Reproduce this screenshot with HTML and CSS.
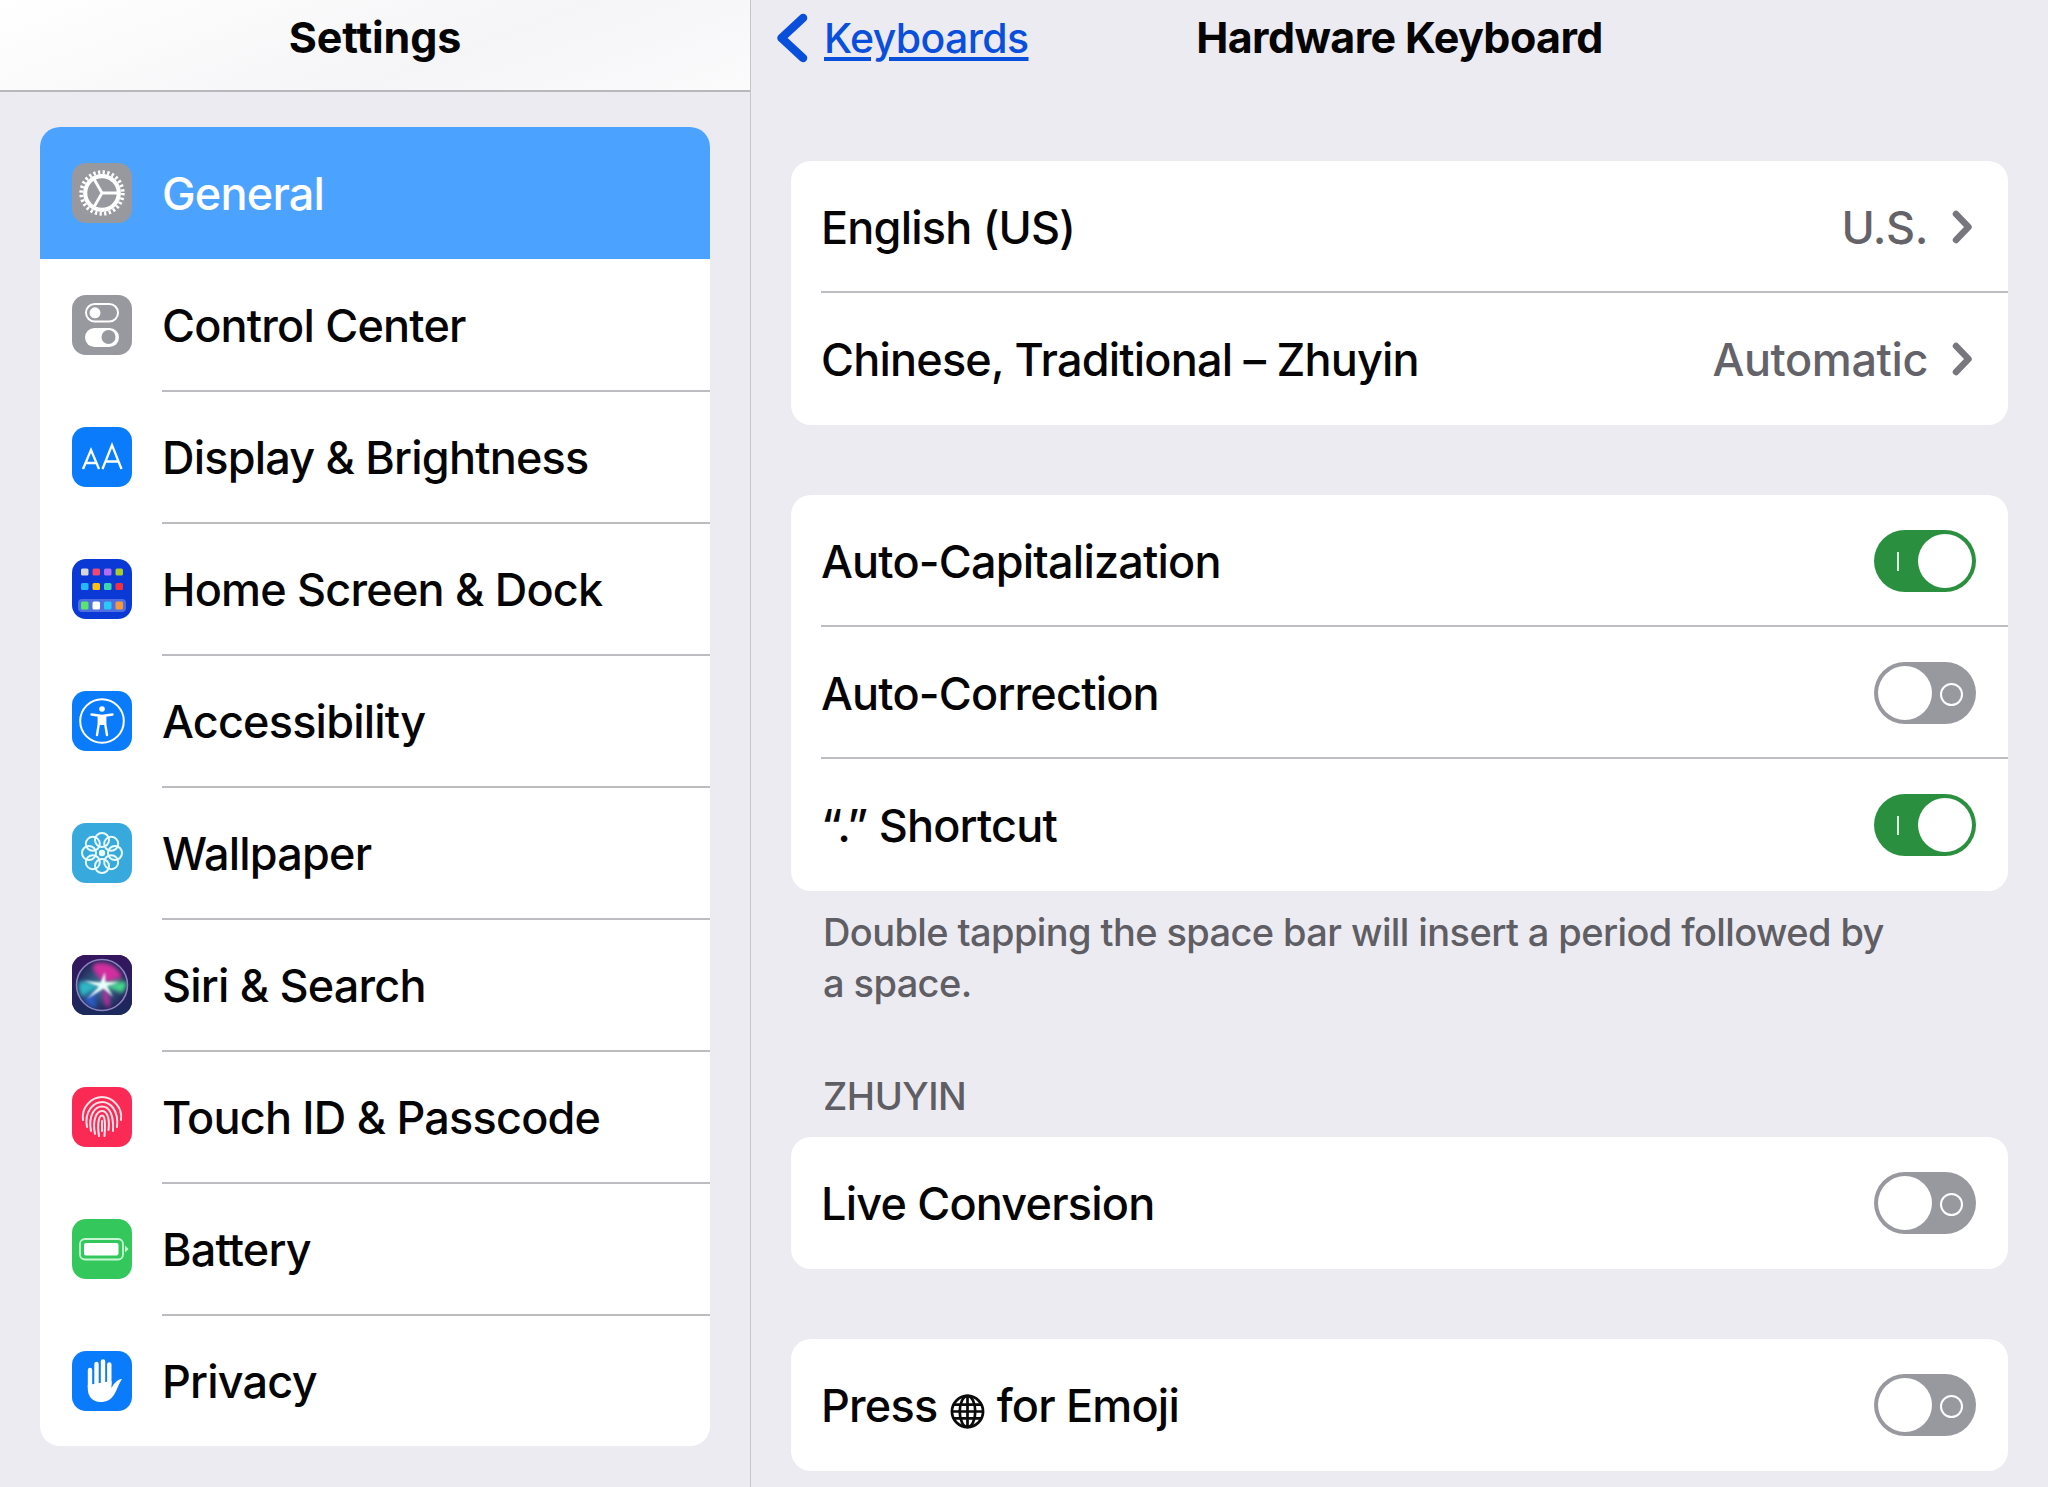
FILE: index.html
```html
<!DOCTYPE html>
<html lang="en">
<head>
<meta charset="utf-8">
<title>Hardware Keyboard</title>
<link rel="stylesheet" href="styles.css">
</head>
<body>
<div class="app">
<aside class="sidebar">
  <header class="side-head"><h1 class="title side-title">Settings</h1></header>
  <ul class="menu">
    <li class="menu-row active">
      <span class="app-icon bg-gray">
        <svg viewBox="0 0 60 60"><circle cx="30" cy="30" r="20.800" fill="none" stroke="#fff" stroke-width="3.800" stroke-dasharray="2.300 2.367"/><circle cx="30" cy="30" r="16.800" fill="none" stroke="#fff" stroke-width="4.200"/><path d="M30 30H46M30 30L22 16M30 30L22 44" stroke="#fff" stroke-width="2.800" fill="none"/></svg>
      </span>
      <span class="menu-label">General</span>
    </li>
    <li class="menu-row">
      <span class="app-icon bg-gray">
        <svg viewBox="0 0 60 60"><rect x="14" y="9" width="32" height="17.500" rx="8.750" fill="none" stroke="#fff" stroke-width="2"/><circle cx="23" cy="17.800" r="5.500" fill="#fff"/><rect x="13" y="33" width="34" height="19" rx="9.500" fill="#fff"/><circle cx="36.500" cy="42" r="7" fill="#98989f"/></svg>
      </span>
      <span class="menu-label">Control Center</span>
    </li>
    <li class="menu-row">
      <span class="app-icon bg-blue">
        <svg viewBox="0 0 60 60"><path d="M11 42L19 23L27 42M13.800 36H24.200" fill="none" stroke="#fff" stroke-width="2.300"/><path d="M30.500 42L40 18L49.500 42M33.500 34.500H46.500" fill="none" stroke="#fff" stroke-width="2.300"/></svg>
      </span>
      <span class="menu-label">Display &amp; Brightness</span>
    </li>
    <li class="menu-row">
      <span class="app-icon bg-home">
        <svg viewBox="0 0 60 60"><rect x="9" y="9.500" width="7.500" height="7" rx="1.500" fill="#d8d8d8"/><rect x="20.500" y="9.500" width="7.500" height="7" rx="1.500" fill="#f0486e"/><rect x="32" y="9.500" width="7.500" height="7" rx="1.500" fill="#b26cf5"/><rect x="43.500" y="9.500" width="7.500" height="7" rx="1.500" fill="#a8cc2c"/><rect x="9" y="24" width="7.500" height="7" rx="1.500" fill="#27b8fa"/><rect x="20.500" y="24" width="7.500" height="7" rx="1.500" fill="#fcc10e"/><rect x="32" y="24" width="7.500" height="7" rx="1.500" fill="#3cd6ae"/><rect x="43.500" y="24" width="7.500" height="7" rx="1.500" fill="#f5303d"/><rect x="6" y="40" width="48" height="13" rx="4" fill="#4f6fe0"/><rect x="9" y="42.500" width="7.500" height="8" rx="1.500" fill="#5be56f"/><rect x="20.500" y="42.500" width="7.500" height="8" rx="1.500" fill="#fff"/><rect x="32" y="42.500" width="7.500" height="8" rx="1.500" fill="#27c8fa"/><rect x="43.500" y="42.500" width="7.500" height="8" rx="1.500" fill="#f79a3c"/></svg>
      </span>
      <span class="menu-label">Home Screen &amp; Dock</span>
    </li>
    <li class="menu-row">
      <span class="app-icon bg-blue">
        <svg viewBox="0 0 60 60"><circle cx="30" cy="30" r="21.800" fill="none" stroke="#fff" stroke-width="2"/><circle cx="30" cy="18" r="2.800" fill="#fff"/><path d="M19.500 23.500L30 25L40.500 23.500" fill="none" stroke="#fff" stroke-width="2.400" stroke-linecap="round"/><path d="M26.800 25V33L25 44M33.200 25V33L35 44" fill="none" stroke="#fff" stroke-width="2.400" stroke-linecap="round"/><rect x="26.800" y="25" width="6.400" height="9" fill="#fff"/></svg>
      </span>
      <span class="menu-label">Accessibility</span>
    </li>
    <li class="menu-row">
      <span class="app-icon bg-wall">
        <svg viewBox="0 0 60 60"><g fill="none" stroke="#e8fbff" stroke-width="2"><circle cx="30" cy="17" r="7"/><circle cx="30" cy="43" r="7"/><circle cx="17" cy="30" r="7"/><circle cx="43" cy="30" r="7"/><circle cx="20.800" cy="20.800" r="7"/><circle cx="39.200" cy="20.800" r="7"/><circle cx="20.800" cy="39.200" r="7"/><circle cx="39.200" cy="39.200" r="7"/></g><circle cx="30" cy="30" r="3.200" fill="#e8fbff"/></svg>
      </span>
      <span class="menu-label">Wallpaper</span>
    </li>
    <li class="menu-row">
      <span class="app-icon bg-siri">
        <svg viewBox="0 0 60 60"><defs><linearGradient id="siriBg" x1="0" y1="0" x2="0" y2="1"><stop offset="0" stop-color="#35155f"/><stop offset="1" stop-color="#1b2a5c"/></linearGradient><radialGradient id="siriBall" cx="50%" cy="50%" r="50%"><stop offset="0" stop-color="#3c7f9c"/><stop offset="1" stop-color="#232358"/></radialGradient><filter id="siriBlur" x="-30%" y="-30%" width="160%" height="160%"><feGaussianBlur stdDeviation="2"/></filter><filter id="siriSoft" x="-30%" y="-30%" width="160%" height="160%"><feGaussianBlur stdDeviation="0.800"/></filter><clipPath id="siriClip"><circle cx="30" cy="30" r="25"/></clipPath></defs><rect width="60" height="60" fill="url(#siriBg)"/><circle cx="30" cy="30" r="25.500" fill="url(#siriBall)" stroke="#8a85c0" stroke-width="1.600"/><g clip-path="url(#siriClip)"><g filter="url(#siriBlur)"><path d="M32 28C25 20 18 14 22 9C32 5 46 10 50 22C44 25 38 26 32 28Z" fill="#d22f9f"/><path d="M31 29C36 36 39 44 37 53C30 49 31 38 31 29Z" fill="#c12ca0"/><path d="M30 31C22 33 14 40 10 42C6 36 6 30 8 26C16 26 22 29 30 31Z" fill="#2fb7c6"/><path d="M33 31L50 38C54 34 55 30 54 26C46 27 38 28 33 31Z" fill="#45d88f"/><path d="M28 32C24 40 22 48 26 54C16 52 12 46 11 44C18 40 24 36 28 32Z" fill="#2a5bc0"/></g><path d="M33 17L33.500 27L47 27.500L35 31L41 42L31.500 33.500L15 44L27 31.500L12 26L28.500 27.500Z" fill="#eafffb" filter="url(#siriSoft)"/></g></svg>
      </span>
      <span class="menu-label">Siri &amp; Search</span>
    </li>
    <li class="menu-row">
      <span class="app-icon bg-touch">
        <svg viewBox="0 0 60 60"><g fill="none" stroke="#ffe3e8" stroke-width="2" stroke-linecap="round"><path d="M11 33C9 20 20 10 30 10C40 10 51 20 49 33"/><path d="M15 40C12 24 22 15 30 15C38 15 47 23 45 40"/><path d="M19 44C16 28 23 19.500 30 19.500C37 19.500 42 27 41 44"/><path d="M23 47C20 32 25 24 30 24C35 24 38 31 36.500 43"/><path d="M27 49C25 36 27 28.500 30 28.500C33 28.500 33.500 36 32.500 49"/><path d="M30 34V44"/></g></svg>
      </span>
      <span class="menu-label">Touch ID &amp; Passcode</span>
    </li>
    <li class="menu-row">
      <span class="app-icon bg-green">
        <svg viewBox="0 0 60 60"><rect x="8" y="20" width="43" height="20.500" rx="5" fill="none" stroke="#c8f5d2" stroke-width="1.800"/><rect x="12" y="24" width="34.500" height="12.500" rx="2" fill="#fff"/><path d="M53 26.500L56.500 30L53 33.500Z" fill="#c8f5d2"/></svg>
      </span>
      <span class="menu-label">Battery</span>
    </li>
    <li class="menu-row">
      <span class="app-icon bg-blue">
        <svg viewBox="0 0 60 60"><g fill="none" stroke="#fff" stroke-width="4.400" stroke-linecap="round"><path d="M18 19V36"/><path d="M24.500 13V33"/><path d="M31 10.500V33"/><path d="M37.300 13.500V33"/></g><path d="M15.800 34L39.500 30V37C41.500 33 45 28.500 50 28C46.500 33 45.500 38 42.500 43C39 49 34.500 51 28.500 51C20.500 51 15.800 45 15.800 38Z" fill="#fff"/></svg>
      </span>
      <span class="menu-label">Privacy</span>
    </li>
  </ul>
</aside>
<main class="detail">
  <header class="detail-head">
    <a class="back" href="#">
      <svg class="back-chevron" viewBox="0 0 32 50"><path d="M27 5L5.500 25L27 45" fill="none" stroke="#0a4fdc" stroke-width="8.500" stroke-linecap="round" stroke-linejoin="round"/></svg>
      <span class="back-link">Keyboards</span>
    </a>
    <h2 class="title detail-title">Hardware Keyboard</h2>
  </header>
  <section class="group first-group">
    <div class="row"><span class="row-label">English (US)</span><span class="row-value">U.S.</span><svg class="chevron" viewBox="0 0 22 34"><path d="M4 4L16.500 17L4 30" fill="none" stroke="#77777d" stroke-width="6.500" stroke-linecap="round" stroke-linejoin="round"/></svg></div>
    <div class="row"><span class="row-label">Chinese, Traditional – Zhuyin</span><span class="row-value">Automatic</span><svg class="chevron" viewBox="0 0 22 34"><path d="M4 4L16.500 17L4 30" fill="none" stroke="#77777d" stroke-width="6.500" stroke-linecap="round" stroke-linejoin="round"/></svg></div>
  </section>
  <section class="group">
    <div class="row"><span class="row-label">Auto-Capitalization</span><span class="toggle on"></span></div>
    <div class="row"><span class="row-label">Auto-Correction</span><span class="toggle off"></span></div>
    <div class="row"><span class="row-label">“.” Shortcut</span><span class="toggle on"></span></div>
  </section>
  <p class="note">Double tapping the space bar will insert a period followed by a space.</p>
  <h3 class="caption">ZHUYIN</h3>
  <section class="group">
    <div class="row"><span class="row-label">Live Conversion</span><span class="toggle off"></span></div>
  </section>
  <section class="group last-group">
    <div class="row"><span class="row-label">Press <svg class="globe" viewBox="0 0 36 36"><g fill="none" stroke="#0b0b0b" stroke-width="2.800"><circle cx="18" cy="18" r="16"/><ellipse cx="18" cy="18" rx="8" ry="16"/><path d="M18 2V34M3 11H33M2 18H34M3 25H33"/></g></svg> for Emoji</span><span class="toggle off"></span></div>
  </section>
</main>
</div>
</body>
</html>
```
FILE: styles.css
```css
* { box-sizing: border-box; }
html, body { margin: 0; height: 100%; overflow: hidden; }
body {
  width: 2048px;
  height: 1487px;
  background: #ecebf1;
  font-family: Inter, "Liberation Sans", sans-serif;
  color: #050505;
}
.app { display: flex; height: 1487px; }
.sidebar {
  width: 751px;
  flex: none;
  border-right: 1px solid #c6c6ca;
}
.side-head {
  height: 92px;
  padding-top: 12px;
  background: linear-gradient(160deg, #ffffff 0%, #f5f5f7 60%, #fbfbfc 100%);
  border-bottom: 2px solid #b8b8bc;
  text-align: center;
}
.title {
  margin: 0;
  font-size: 43px;
  line-height: 50px;
  font-weight: 700;
  letter-spacing: -0.6px;
  color: #050505;
}
.side-title { letter-spacing: -0.1px; }
.menu {
  list-style: none;
  height: 1319px;
  margin: 35px 40px 0;
  padding: 0;
  background: #fff;
  border-radius: 20px;
  overflow: hidden;
}
.menu-row {
  position: relative;
  height: 132px;
  display: flex;
  align-items: center;
  padding-left: 32px;
  gap: 30px;
}
.menu-row + .menu-row + .menu-row::before {
  content: "";
  position: absolute;
  top: -1px;
  left: 122px;
  right: 0;
  height: 2px;
  background: #bdbdc1;
}
.menu-row.active { background: #4ca3ff; color: #fff; }
.app-icon {
  width: 60px;
  height: 60px;
  flex: none;
  border-radius: 14px;
  overflow: hidden;
}
.app-icon svg { display: block; width: 60px; height: 60px; }
.bg-gray { background: #98989f; }
.bg-blue { background: #0a7cfb; }
.bg-home { background: #0a39d6; }
.bg-wall { background: #38a9dc; }
.bg-siri { background: #1f1d4d; }
.bg-touch { background: #fb2a55; }
.bg-green { background: #34c85c; }
.menu-label {
  font-size: 45px;
  font-weight: 500;
  letter-spacing: -0.8px;
  line-height: 54px;
  padding-top: 1px;
}
.detail { flex: 1; min-width: 0; padding: 0 40px; }
.detail-head {
  position: relative;
  height: 92px;
  display: flex;
  justify-content: center;
  padding-top: 12px;
}
.back {
  position: absolute;
  left: -15px;
  top: 13px;
  display: flex;
  align-items: center;
  gap: 16px;
  text-decoration: none;
}
.back-chevron { width: 32px; height: 50px; display: block; }
.back-link {
  font-size: 41px;
  line-height: 50px;
  color: #0a4fdc;
  text-decoration: underline;
  text-decoration-thickness: 4px;
  text-underline-offset: 4px;
  font-weight: 500;
  letter-spacing: -0.6px;
}
.group {
  width: 1217px;
  margin-top: 70px;
  background: #fff;
  border-radius: 20px;
  overflow: hidden;
}
.first-group { margin-top: 69px; }
.last-group { margin-top: 70px; }
.row {
  position: relative;
  height: 132px;
  display: flex;
  align-items: center;
  padding: 0 32px 0 30px;
}
.row + .row::before {
  content: "";
  position: absolute;
  top: -2px;
  left: 30px;
  right: 0;
  height: 2px;
  background: #bdbdc1;
}
.row-label {
  flex: 1;
  font-size: 45px;
  font-weight: 500;
  line-height: 54px;
  letter-spacing: -0.8px;
  white-space: nowrap;
  padding-top: 2px;
}
.row-value {
  font-size: 45px;
  font-weight: 500;
  line-height: 54px;
  letter-spacing: -0.4px;
  color: #636369;
  margin-right: 24px;
  padding-top: 2px;
}
.chevron { width: 22px; height: 34px; display: block; flex: none; margin-right: 2px; }
.globe { width: 35px; height: 35px; vertical-align: -7px; margin: 0 1px; }
.toggle {
  position: relative;
  width: 102px;
  height: 62px;
  border-radius: 31px;
  flex: none;
}
.toggle::before {
  content: "";
  position: absolute;
  top: 4px;
  width: 54px;
  height: 54px;
  border-radius: 50%;
  background: #fff;
}
.toggle.on { background: #2a8f3f; }
.toggle.on::before { right: 4px; }
.toggle.on::after {
  content: "";
  position: absolute;
  left: 23px;
  top: 22px;
  width: 2px;
  height: 19px;
  background: #dff0e3;
}
.toggle.off { background: #98989f; }
.toggle.off::before { left: 4px; }
.toggle.off::after {
  content: "";
  position: absolute;
  right: 13px;
  top: 21px;
  width: 19px;
  height: 19px;
  border-radius: 50%;
  border: 2px solid #fff;
}
.note {
  margin: 16px 0 0 32px;
  width: 1075px;
  font-size: 38px;
  font-weight: 500;
  line-height: 51px;
  letter-spacing: -0.6px;
  color: #5e5e64;
}
.caption {
  margin: 62px 0 0 32px;
  font-size: 38px;
  line-height: 50px;
  font-weight: 500;
  letter-spacing: -0.5px;
  color: #5e5e64;
}
.caption + .group { margin-top: 16px; }
```
